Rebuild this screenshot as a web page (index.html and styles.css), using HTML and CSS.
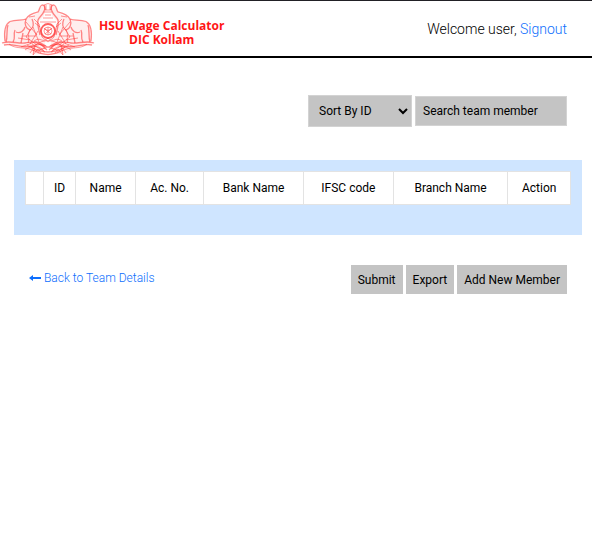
FILE: index.html
```html
<!DOCTYPE html>
<html lang="en">
<head>
<meta charset="utf-8">
<meta name="viewport" content="width=device-width, initial-scale=1">
<title>HSU Wage Calculator</title>
<link rel="stylesheet" href="styles.css">
</head>
<body>
<header class="topbar">
  <div class="brand">
    <svg class="emblem" viewBox="0 0 94 54" aria-hidden="true">
      <defs>
        <g id="supporter">
          <path class="wash" d="M4 40C3 30 4 22 11 19C17 17 22 18 26 16L37 11L40 3L45 6L43 14L38 19L40 32L44 38V52H30L20 45L1 42Z"/>
          <path class="outline" d="M4 39C3 31 3 23 9 19.500C15 17 21 19 25 17C28 12 33 11 37 10C39 8 38 4 41 3C44 3 45 6 43 9C42 13 38 15 37 18C36 23 38 28 39 33"/>
          <path class="outline" d="M7 23C5 28 7 34 5 40M14 28C12 33 15 36 12 40M15 30C19 32 23 29 24 25M22 31L20 41M25 17C23 22 25 27 29 28C33 26 33 21 31 17"/>
          <path d="M28 15L34 14M33 17L38 22M34 21L39 25M29 28C26 32 29 36 27 41M30 27L25 35L36 43M37 29L29 42M32 25L38 40M22 34H35M17 36L29 38M25 20L36 33"/>
          <path class="outline" d="M1 41C9 38 16 42 24 41S35 38 45 44M3 43C13 41 20 47 31 44S39 42 46 48"/>
          <path d="M8 42C15 48 26 44 33 49M20 45L34 40L44 45M24 48C30 43 38 43 43 49M29 51L34 44L32 53L37 47L40 51M26 43L38 50M31 42L44 50"/>
        </g>
      </defs>
      <use href="#supporter"/>
      <use href="#supporter" transform="translate(94 0) scale(-1 1)"/>
      <circle class="ring" cx="47" cy="29" r="7"/>
      <circle cx="47" cy="29" r="4"/>
      <path d="M43 26C45 29 49 29 51 26M47 25V33M44 32L50 27M44 27L50 32M39 20H55M38 22L41 35L47 40L53 35L56 22"/>
      <path d="M43 3Q47 0 51 3L50 8H44ZM43 10H51M44 13H50M42 16H52M45 3V8M49 3V8M33 39C40 34 41 42 47 36C53 42 54 34 61 39M34 43Q47 34 60 43"/>
      <path class="outline" d="M30 45Q47 55 64 45M32 48Q47 57 62 48M38 42L56 48M56 42L38 48"/>
    </svg>
    <div class="brand-name"><div>HSU Wage Calculator</div><div>DIC Kollam</div></div>
  </div>
  <div class="account">Welcome user, <a href="#">Signout</a></div>
</header>
<main>
  <form class="filters">
    <select class="control sort" aria-label="Sort members">
      <option>Sort By ID</option>
    </select>
    <input class="control search" type="text" aria-label="Search team member" placeholder="Search team member">
  </form>
  <section class="panel">
    <table class="members">
      <colgroup>
        <col class="col-check"><col class="col-id"><col class="col-name"><col class="col-account"><col class="col-bank"><col class="col-ifsc"><col class="col-branch"><col class="col-action">
      </colgroup>
      <thead>
        <tr><th></th><th>ID</th><th>Name</th><th>Ac. No.</th><th>Bank Name</th><th>IFSC code</th><th>Branch Name</th><th>Action</th></tr>
      </thead>
    </table>
  </section>
  <div class="actions">
    <a class="back" href="#">
      <svg class="arrow" viewBox="0 0 12 8" aria-hidden="true"><path d="M0 4L4 1V3H12V5H4V7Z"/></svg>Back to Team Details</a>
    <div class="buttons">
      <button type="button">Submit</button>
      <button type="button">Export</button>
      <button type="button">Add New Member</button>
    </div>
  </div>
</main>
</body>
</html>
```
FILE: styles.css
```css
* {
  box-sizing: border-box;
}

body {
  margin: 0;
  background: #fff;
  color: #000;
  font: 300 12px/16px Roboto, "Liberation Sans", sans-serif;
}

a {
  color: #0d6efd;
  text-decoration: none;
}

.topbar {
  display: flex;
  justify-content: space-between;
  align-items: center;
  height: 58px;
  padding: 0 25px 0 1px;
  border-top: 1px solid #212025;
  border-bottom: 2px solid #000;
}

.brand {
  display: flex;
  align-items: center;
  gap: 4px;
}

.emblem {
  width: 94px;
  height: 54px;
  fill: none;
  stroke: #ff2a2a;
  stroke-width: 0.9;
  stroke-opacity: 0.55;
}

.emblem .wash {
  fill: #ff2a2a;
  fill-opacity: 0.08;
  stroke: none;
}

.emblem .outline {
  stroke-width: 1.3;
}

.emblem .ring {
  stroke-width: 1.8;
  stroke-opacity: 0.75;
}

.brand-name {
  padding-top: 8px;
  color: #ff1616;
  font: 700 12px/14px "Open Sans", sans-serif;
  text-align: center;
}

.account {
  font-size: 14px;
}

.filters {
  display: flex;
  justify-content: flex-end;
  align-items: center;
  gap: 3px;
  padding: 37px 25px 0;
}

.control {
  border: 1px solid #d3d3d3;
  border-radius: 0;
  background: #c4c4c4;
  color: #000;
  font: 400 12px/16px Roboto, sans-serif;
}

.sort {
  width: 104px;
  height: 32px;
  padding: 0 0 0 6px;
}

.search {
  width: 152px;
  height: 30px;
  padding: 0 7px;
}

.search::placeholder {
  color: #000;
  opacity: 1;
}

.panel {
  margin: 33px 10px 0 14px;
  padding: 11px 11px 30px;
  background: #cfe5ff;
}

.members {
  width: 100%;
  table-layout: fixed;
  border-collapse: collapse;
  background: #fff;
}

.members th {
  height: 33px;
  padding: 0;
  border: 1px solid #e3e3e3;
  font-weight: 400;
  text-align: center;
}

.col-check { width: 3.3%; }
.col-id { width: 5.9%; }
.col-name { width: 11%; }
.col-account { width: 12.5%; }
.col-bank { width: 18.3%; }
.col-ifsc { width: 16.5%; }
.col-branch { width: 21%; }
.col-action { width: 11.5%; }

.actions {
  display: flex;
  justify-content: space-between;
  align-items: center;
  padding: 30px 25px 0 29px;
}

.back {
  display: flex;
  align-items: center;
  gap: 3px;
  padding-bottom: 4px;
}

.arrow {
  width: 12px;
  height: 8px;
  fill: #0d6efd;
}

.buttons {
  display: flex;
  gap: 3px;
}

button {
  height: 29px;
  padding: 0 7px;
  border: 0;
  background: #c4c4c4;
  color: #000;
  font: 400 12px/16px Roboto, sans-serif;
}
```
